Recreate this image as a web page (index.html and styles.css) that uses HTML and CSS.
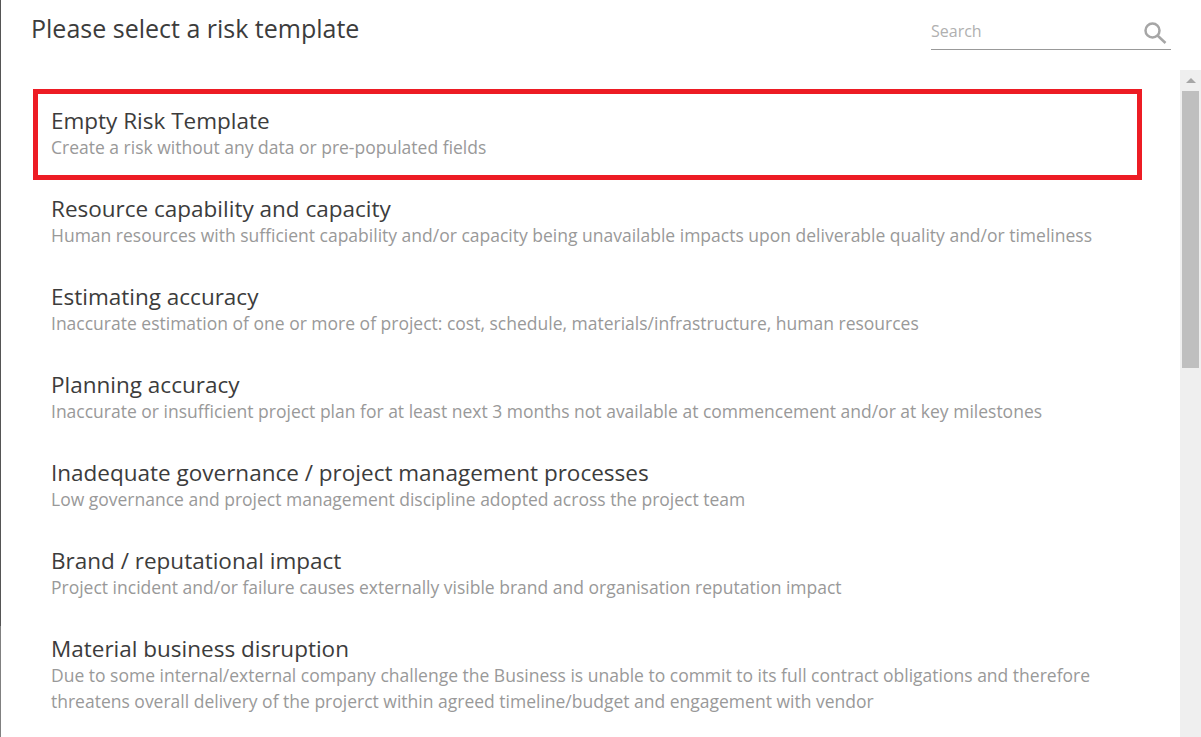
FILE: index.html
```html
<!DOCTYPE html>
<html lang="en">
<head>
    <meta charset="UTF-8">
    <title>Please select a risk template</title>
    <link rel="stylesheet" href="styles.css">
</head>
<body>
    <div class="dialog">
        <div class="header">
            <h1 class="title">Please select a risk template</h1>
            <div class="search">
                <span class="search-label">Search</span>
                <svg class="search-icon" width="23" height="22" viewBox="0 0 23 22" fill="none" stroke="#a6a6a6" stroke-width="2.5">
                    <circle cx="8.5" cy="8.5" r="7"/>
                    <path d="M13.5 13.5l8 7.5"/>
                </svg>
            </div>
        </div>
        <div class="body">
            <div class="list">
                <div class="item selected">
                    <div class="item-name">Empty Risk Template</div>
                    <div class="item-desc">Create a risk without any data or pre-populated fields</div>
                </div>
                <div class="item">
                    <div class="item-name">Resource capability and capacity</div>
                    <div class="item-desc">Human resources with sufficient capability and/or capacity being unavailable impacts upon deliverable quality and/or timeliness</div>
                </div>
                <div class="item">
                    <div class="item-name">Estimating accuracy</div>
                    <div class="item-desc">Inaccurate estimation of one or more of project: cost, schedule, materials/infrastructure, human resources</div>
                </div>
                <div class="item">
                    <div class="item-name">Planning accuracy</div>
                    <div class="item-desc">Inaccurate or insufficient project plan for at least next 3 months not available at commencement and/or at key milestones</div>
                </div>
                <div class="item">
                    <div class="item-name">Inadequate governance / project management processes</div>
                    <div class="item-desc">Low governance and project management discipline adopted across the project team</div>
                </div>
                <div class="item">
                    <div class="item-name">Brand / reputational impact</div>
                    <div class="item-desc">Project incident and/or failure causes externally visible brand and organisation reputation impact</div>
                </div>
                <div class="item">
                    <div class="item-name">Material business disruption</div>
                    <div class="item-desc">Due to some internal/external company challenge the Business is unable to commit to its full contract obligations and therefore threatens overall delivery of the projerct within agreed timeline/budget and engagement with vendor</div>
                </div>
            </div>
            <div class="scrollbar">
                <div class="scroll-arrow"></div>
                <div class="scroll-thumb"></div>
            </div>
        </div>
    </div>
</body>
</html>
```

FILE: styles.css
```css
html, body {
    margin: 0;
    height: 100%;
    overflow: hidden;
}
body {
    font-family: "Open Sans", sans-serif;
    background: #fff;
    color: #333;
}
.dialog {
    height: 737px;
    box-sizing: border-box;
    border-left: 1px solid #555;
    border-image: linear-gradient(#555 625px, #808080 625px) 1;
    display: flex;
    flex-direction: column;
}
.header {
    display: flex;
    justify-content: space-between;
    padding: 12px 30px 0 30px;
    height: 70px;
    box-sizing: border-box;
}
.title {
    margin: 0;
    font-size: 25px;
    font-weight: 400;
    line-height: 32px;
    color: #3c3c3c;
}
.search {
    width: 240px;
    height: 38px;
    box-sizing: border-box;
    border-bottom: 1px solid #999;
    display: flex;
    justify-content: space-between;
    align-items: center;
}
.search-label {
    font-size: 16px;
    color: #b0b0b0;
}
.search-icon {
    margin-right: 4px;
    margin-top: 4px;
}
.body {
    flex: 1;
    display: flex;
    padding-left: 32px;
    min-height: 0;
}
.list {
    width: 1109px;
    flex: none;
    padding-top: 19px;
}
.item {
    box-sizing: border-box;
    height: 88px;
    padding: 18px 18px 0 18px;
}
.item.selected {
    height: 91px;
    margin-bottom: -3px;
    padding: 13px 13px 0 13px;
    border: 5px solid #ed1c24;
}
.item-name {
    font-size: 22.5px;
    line-height: 27px;
    color: #3c3c3c;
}
.item-desc {
    font-size: 17.5px;
    line-height: 26px;
    color: #999;
}
.scrollbar {
    margin-left: 38px;
    width: 21px;
    flex: none;
    background: #efefef;
}
.scroll-arrow {
    height: 21px;
    box-sizing: border-box;
    padding-top: 8px;
}
.scroll-arrow::before {
    content: "";
    display: block;
    width: 0;
    margin: 0 auto;
    border-left: 5px solid transparent;
    border-right: 5px solid transparent;
    border-bottom: 5px solid #a6a6a6;
}
.scroll-thumb {
    height: 277px;
    margin: 0 2px;
    background: #bfbfbf;
}
```
